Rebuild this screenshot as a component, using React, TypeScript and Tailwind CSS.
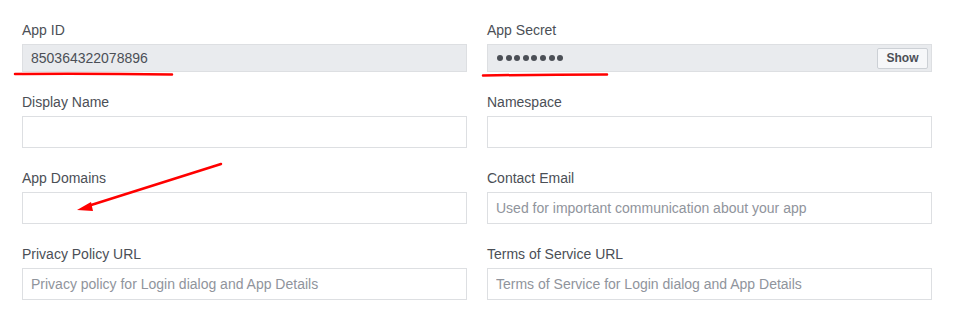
import React from "react";

const font = { fontFamily: "'Liberation Sans', Arial, Helvetica, sans-serif" };

type Field = {
  label: string;
  placeholder?: string;
};

const rows: [Field, Field][] = [
  [{ label: "Display Name" }, { label: "Namespace" }],
  [
    { label: "App Domains" },
    { label: "Contact Email", placeholder: "Used for important communication about your app" },
  ],
  [
    { label: "Privacy Policy URL", placeholder: "Privacy policy for Login dialog and App Details" },
    { label: "Terms of Service URL", placeholder: "Terms of Service for Login dialog and App Details" },
  ],
];

function Label({ children }: { children: React.ReactNode }) {
  return <div className="mb-[5px] h-[18px] text-[14px] leading-[18px] text-[#4b4f56]">{children}</div>;
}

function TextField({ field }: { field: Field }) {
  return (
    <div>
      <Label>{field.label}</Label>
      <input
        type="text"
        placeholder={field.placeholder}
        className="block h-[32px] w-full border border-[#dddfe2] bg-white px-[8px] text-[14px] text-[#1d2129] outline-none placeholder:text-[#90949c]"
        style={font}
      />
    </div>
  );
}

export default function App() {
  return (
    <div className="relative h-[317px] w-[955px] overflow-hidden bg-white" style={font}>
      <div className="grid w-[932px] grid-cols-2 gap-x-[20px] gap-y-[21px] pl-[22px] pt-[21px]">
        {/* App ID */}
        <div>
          <Label>App ID</Label>
          <input
            type="text"
            readOnly
            defaultValue="850364322078896"
            className="block h-[28px] w-full border border-[#dddfe2] bg-[#e9ebee] px-[8px] text-[14px] text-[#4b4f56] outline-none"
            style={font}
          />
        </div>

        {/* App Secret */}
        <div>
          <Label>App Secret</Label>
          <div className="flex h-[28px] w-full items-center border border-[#dddfe2] bg-[#e9ebee] pl-[9px] pr-[3px]">
            <div className="flex flex-1 items-center gap-[2.6px]" aria-label="hidden secret">
              {Array.from({ length: 8 }).map((_, i) => (
                <span key={i} className="h-[6px] w-[6px] rounded-full bg-[#4b4f56]" />
              ))}
            </div>
            <button className="h-[21px] w-[51px] rounded-[2px] border border-[#ccd0d5] bg-[#f6f7f9] text-[12px] font-bold leading-[19px] text-[#4b4f56]">
              Show
            </button>
          </div>
        </div>

        {rows.map(([a, b]) => (
          <React.Fragment key={a.label}>
            <TextField field={a} />
            <TextField field={b} />
          </React.Fragment>
        ))}
      </div>

      {/* red annotations drawn over the form */}
      <svg className="pointer-events-none absolute inset-0" width="955" height="317" viewBox="0 0 955 317">
        <path d="M15 74 Q 95 73.5 172 74.5" stroke="#ff0000" strokeWidth="2.5" fill="none" strokeLinecap="round" />
        <path d="M483 75.5 Q 545 74.5 607 74.5" stroke="#ff0000" strokeWidth="2.5" fill="none" strokeLinecap="round" />
        <line x1="221" y1="164" x2="88" y2="206" stroke="#ff0000" strokeWidth="2.5" strokeLinecap="round" />
        <polygon points="77,210 91,202 93,211" fill="#ff0000" />
      </svg>
    </div>
  );
}
